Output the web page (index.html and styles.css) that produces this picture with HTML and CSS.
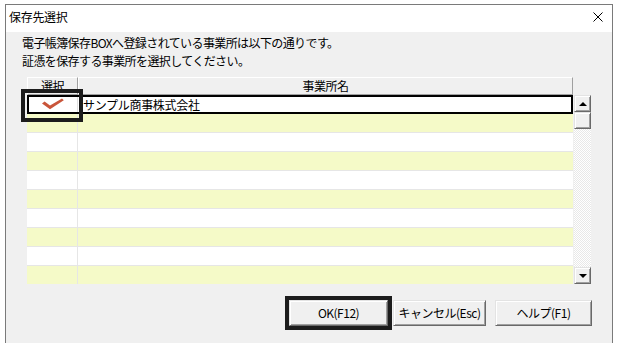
FILE: index.html
```html
<!DOCTYPE html>
<html lang="ja">
<head>
<meta charset="utf-8">
<title>保存先選択</title>
<link rel="stylesheet" href="styles.css">
</head>
<body>
<div class="dialog">
  <div class="titlebar">
    <span class="title">保存先選択</span>
    <svg class="close" width="10" height="10" viewBox="0 0 10 10"><path d="M0.5 0.5 L9.5 9.5 M9.5 0.5 L0.5 9.5" stroke="#000" stroke-width="1" fill="none"/></svg>
  </div>
  <div class="content">
    <div class="msg">
      <div class="line">電子帳簿保存BOXへ登録されている事業所は以下の通りです。</div>
      <div class="line">証憑を保存する事業所を選択してください。</div>
    </div>
    <div class="grid">
      <div class="header">
        <div class="hcell c1">選択</div>
        <div class="hcell c2">事業所名</div>
      </div>
      <div class="body">
        <div class="rows">
          <div class="row selected">
            <div class="cell c1 marked">
              <svg width="48" height="15" viewBox="0 0 48 15"><path d="M13 6.6 L15.6 4.5 L21 8.4 L33 1.4 L34.8 3.2 L21 12.3 Z" fill="#c9553a"/></svg>
            </div>
            <div class="cell c2 name">サンプル商事株式会社</div>
          </div>
          <div class="row y"><div class="cell c1"></div><div class="cell c2"></div></div>
          <div class="row w"><div class="cell c1"></div><div class="cell c2"></div></div>
          <div class="row y"><div class="cell c1"></div><div class="cell c2"></div></div>
          <div class="row w"><div class="cell c1"></div><div class="cell c2"></div></div>
          <div class="row y"><div class="cell c1"></div><div class="cell c2"></div></div>
          <div class="row w"><div class="cell c1"></div><div class="cell c2"></div></div>
          <div class="row y"><div class="cell c1"></div><div class="cell c2"></div></div>
          <div class="row w"><div class="cell c1"></div><div class="cell c2"></div></div>
          <div class="row y last"><div class="cell c1"></div><div class="cell c2"></div></div>
        </div>
        <div class="scrollbar">
          <div class="sbtn"><span class="arrow up"></span></div>
          <div class="sbtn thumb"></div>
          <div class="track"></div>
          <div class="sbtn"><span class="arrow down"></span></div>
        </div>
      </div>
    </div>
    <div class="buttons">
      <button class="btn ok">OK(F12)</button>
      <button class="btn cancel">キャンセル(Esc)</button>
      <button class="btn help">ヘルプ(F1)</button>
    </div>
  </div>
</div>
</body>
</html>
```

FILE: styles.css
```css
html, body {
  margin: 0;
  padding: 0;
  background: #ffffff;
  width: 625px;
  height: 343px;
  overflow: hidden;
  font-family: "Noto Sans CJK JP", "Noto Sans", sans-serif;
  font-size: 12px;
  color: #000;
}

.dialog {
  margin: 4px 0 0 5px;
  width: 606px;
  height: 340px;
  border: 1px solid #7a7a7a;
  border-bottom: none;
  background: #f0f0f0;
  display: flex;
  flex-direction: column;
}

.titlebar {
  height: 27px;
  background: #ffffff;
  display: flex;
  align-items: center;
  justify-content: space-between;
  padding: 0 9px 0 3px;
}

.title {
  font-size: 12px;
  line-height: 16px;
  letter-spacing: -0.3px;
  margin-top: -3px;
}

.close {
  display: block;
  margin-top: -3px;
}

.content {
  display: flex;
  flex-direction: column;
}

.msg {
  padding: 2px 0 0 16px;
}

.line {
  height: 18px;
  line-height: 18px;
  font-size: 12px;
  letter-spacing: -0.6px;
}

.grid {
  margin: 7px 0 0 21px;
  width: 564px;
}

.header {
  display: flex;
  width: 546px;
  height: 18px;
}

.hcell {
  box-sizing: border-box;
  height: 18px;
  line-height: 15px;
  text-align: center;
  background: #f0f0f0;
  border-top: 1px solid #ffffff;
  border-left: 1px solid #ffffff;
  border-right: 1px solid #a0a0a0;
  border-bottom: 1px solid #a0a0a0;
  letter-spacing: -0.5px;
}

.hcell.c1 { width: 51px; }
.hcell.c2 { flex: 1; }

.body {
  display: flex;
  gap: 1px;
  height: 189px;
}

.rows {
  width: 546px;
  display: flex;
  flex-direction: column;
}

.row {
  display: flex;
  height: 19px;
  flex: none;
  box-sizing: border-box;
  border-bottom: 1px solid #e6e6e6;
}

.row.last {
  height: 18px;
  border-bottom: none;
}

.row.y { background: #f5fac8; }
.row.w { background: #ffffff; }

.cell {
  height: 100%;
  box-sizing: border-box;
}

.cell.c1 {
  width: 51px;
  border-right: 1px solid #e6e6e6;
}

.cell.c2 { flex: 1; }

.row.selected {
  background: #ffffff;
  border: 2px solid #000000;
  height: 19px;
}

.row.selected .cell.c1 {
  width: 49px;
  border-right: 1px solid #e0e0e0;
  position: relative;
}

.row.selected svg {
  display: block;
}

.marked::after {
  content: "";
  position: absolute;
  left: -8px;
  top: -8px;
  width: 62px;
  height: 33px;
  box-sizing: border-box;
  border: 4px solid #1c1c1c;
}

.name {
  padding-left: 5px;
  line-height: 15px;
  letter-spacing: -0.3px;
}

.scrollbar {
  width: 17px;
  display: flex;
  flex-direction: column;
}

.sbtn {
  height: 17px;
  box-sizing: border-box;
  background: #f0f0f0;
  border-top: 1px solid #e3e3e3;
  border-left: 1px solid #e3e3e3;
  border-right: 1px solid #696969;
  border-bottom: 1px solid #696969;
  box-shadow: inset 1px 1px #ffffff, inset -1px -1px #a0a0a0;
  display: flex;
  align-items: center;
  justify-content: center;
  flex: none;
}

.track {
  flex: 1;
  background-color: #ffffff;
  background-image: repeating-conic-gradient(#e8e8e8 0 25%, #ffffff 0 50%);
  background-size: 2px 2px;
}

.arrow {
  width: 0;
  height: 0;
  border-left: 4px solid transparent;
  border-right: 4px solid transparent;
}

.arrow.up { border-bottom: 4px solid #000; }
.arrow.down { border-top: 4px solid #000; }

.buttons {
  display: flex;
  justify-content: flex-end;
  padding-right: 20px;
  margin-top: 16px;
}

.btn {
  height: 26px;
  box-sizing: border-box;
  background: #f0f0f0;
  border-top: 1px solid #e3e3e3;
  border-left: 1px solid #e3e3e3;
  border-right: 1px solid #696969;
  border-bottom: 1px solid #696969;
  box-shadow: inset 1px 1px #ffffff, inset -1px -1px #a0a0a0;
  font-family: "Noto Sans CJK JP", "Noto Sans", sans-serif;
  font-size: 12px;
  letter-spacing: -0.5px;
  color: #000;
  padding: 0;
  line-height: 20px;
}

.btn.ok {
  width: 99px;
  margin-right: 5px;
  outline: 4px solid #1c1c1c;
  outline-offset: 0;
}

.btn.cancel {
  width: 93px;
  margin-right: 9px;
}

.btn.help {
  width: 97px;
}
```
